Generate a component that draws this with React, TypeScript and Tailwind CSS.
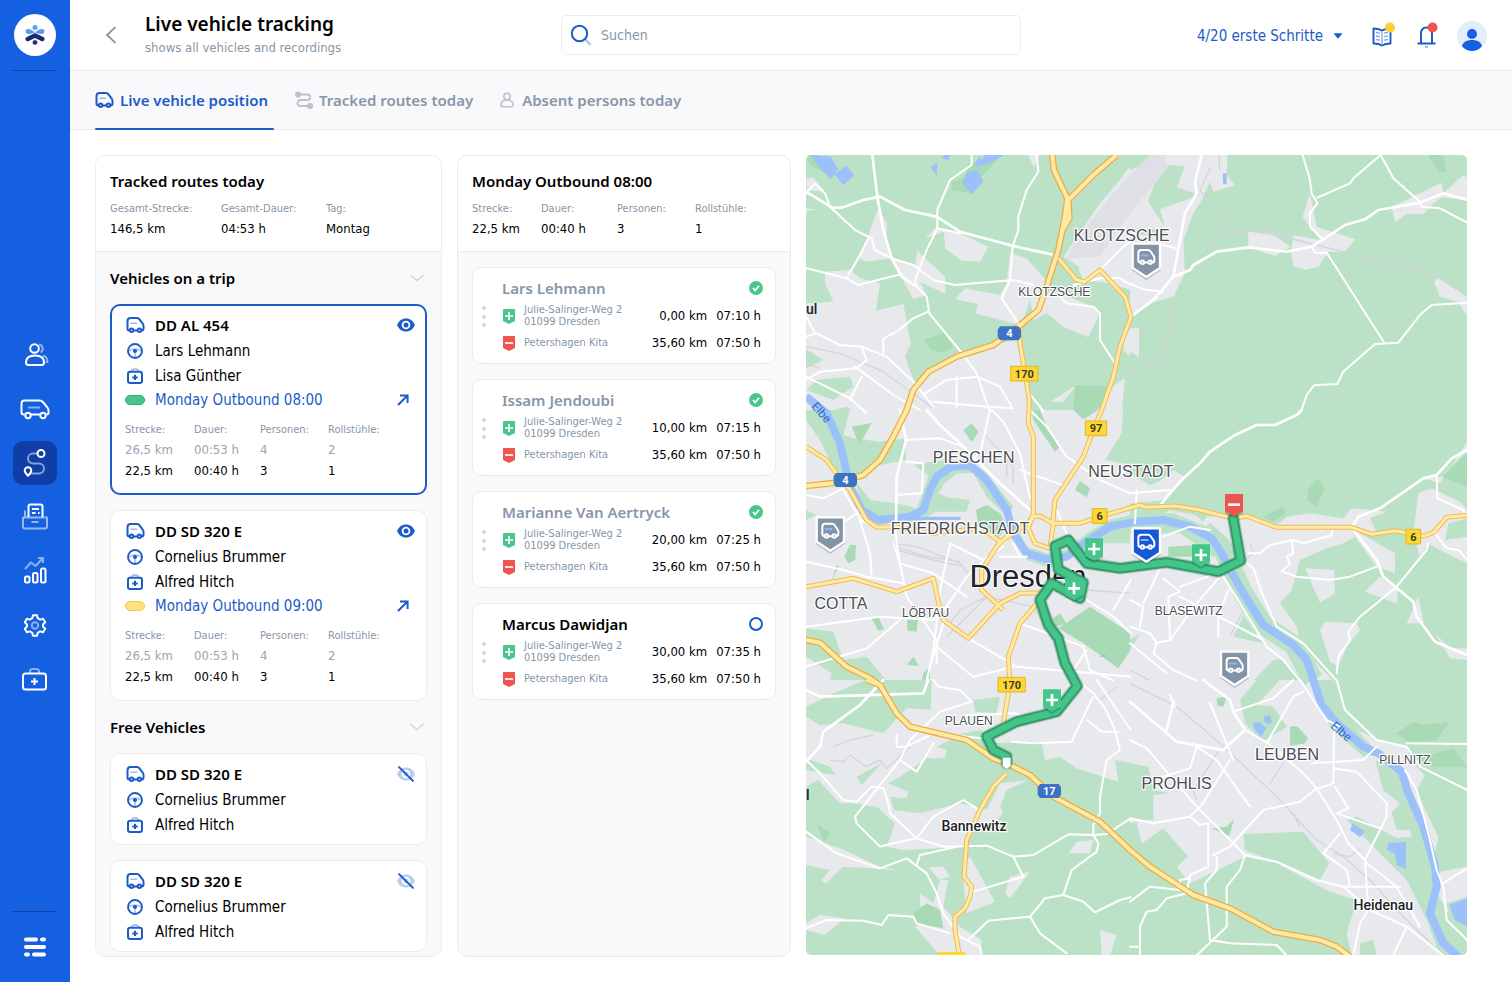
import type { ReactNode } from "react";

/* ---------- icons ---------- */

function CarIcon({ className = "" }: { className?: string }) {
  return (
    <svg viewBox="0 0 18 16" className={className} fill="none" stroke="currentColor" strokeWidth="2" strokeLinecap="round" aria-hidden="true">
      <path d="M2.8 13.4C1.6 13.3 1 12.6 1 11.4V4.2C1 2.1 2.1 1 4.2 1h6.4c1 0 1.700.3 2.200 1.100l3.400 4.600c.6.8.8 1.500.8 2.400v2.300c0 1.200-.6 1.900-1.800 2" />
      <path d="M7.300 13.400h3.200" />
      <circle cx="5.100" cy="13.200" r="1.700" />
      <circle cx="12.900" cy="13.200" r="1.700" />
      <path d="M4.400 6.300h5.800" strokeWidth="1.400" opacity=".4" />
    </svg>
  );
}

function WheelIcon() {
  return (
    <svg viewBox="0 0 16 16" className="size-4" fill="none" stroke="currentColor" aria-hidden="true">
      <circle cx="8" cy="8" r="7" strokeWidth="1.900" />
      <path d="M2 8c3-2.400 9-2.400 12 0M8 9v5" strokeWidth="1.800" opacity=".35" />
      <circle cx="8" cy="8" r="2.100" fill="currentColor" stroke="none" />
    </svg>
  );
}

function KitIcon() {
  return (
    <svg viewBox="0 0 16 16" className="size-4" fill="none" stroke="currentColor" aria-hidden="true">
      <path d="M4.500 3.400C4.700 1.800 5.600 1.100 7 1.100h2c1.400 0 2.300.7 2.500 2.300" strokeWidth="1.600" opacity=".4" />
      <rect x="1" y="3.800" width="14" height="11.200" rx="2.200" strokeWidth="2" />
      <path d="M8 6.700v5.400M5.300 9.400h5.400" strokeWidth="2" />
    </svg>
  );
}

function EyeIcon({ off = false }: { off?: boolean }) {
  return (
    <svg viewBox="0 0 18 16" className="h-4 w-[18px]" aria-hidden="true">
      <g opacity={off ? 0.3 : 1}>
        <path d="M9 1.500C4.800 1.500 1.600 4.200 0 8c1.600 3.800 4.800 6.500 9 6.500s7.400-2.700 9-6.500C16.400 4.200 13.200 1.500 9 1.500Z" fill="currentColor" />
        <circle cx="9" cy="8" r="4.300" fill="#fff" />
        <circle cx="9" cy="8" r="2.500" fill="currentColor" />
      </g>
      {off && <path d="M1.500.500 16.500 15.500" stroke="currentColor" strokeWidth="1.800" />}
    </svg>
  );
}

function ArrowIcon() {
  return (
    <svg viewBox="0 0 12 12" className="size-3" fill="none" stroke="currentColor" strokeWidth="2" aria-hidden="true">
      <path d="M1 11 10.500 1.500M3 1.400h7.600V9" />
    </svg>
  );
}

function StopIcon({ kind }: { kind: "in" | "out" }) {
  return (
    <svg viewBox="0 0 12 15" className="h-[15px] w-3" aria-hidden="true">
      <path d="M0 0h12v12L6 15 0 12Z" fill={kind === "in" ? "#48c78c" : "#f0544f"} />
      <path d={kind === "in" ? "M6 3v8M2 7h8" : "M2 7h8"} stroke="#fff" strokeWidth="1.700" />
    </svg>
  );
}

function ChevronDown() {
  return (
    <svg viewBox="0 0 14 8" className="h-2 w-[14px]" fill="none" stroke="#d4d6db" strokeWidth="1.500" aria-hidden="true">
      <path d="M.5 1 7 6.500 13.500 1" />
    </svg>
  );
}

const navIcons: { label: string; icon: ReactNode }[] = [
  {
    label: "Persons",
    icon: (
      <>
        <path d="M19 4.500a4.300 4.300 0 0 1 1.500 8M23 15.500c3 .8 4.500 3 4.500 6.500h-2" opacity=".5" />
        <circle cx="14.500" cy="8.500" r="4.300" />
        <path d="M6 22.500c0-4.500 3.500-7 9-7s9 2.500 9 7c0 1.700-.8 2.500-2.500 2.500h-13C6.800 25 6 24.200 6 22.500Z" />
      </>
    ),
  },
  {
    label: "Vehicles",
    icon: (
      <>
        <path d="M4.500 20.500H3.500c-1.500 0-2-.7-2-2V9.500C1.500 7.500 2.500 6.500 4.500 6.500h15c1.500 0 2.500.4 3.400 1.500l4.200 5.200c.9 1.100 1.400 1.800 1.400 3v2.300c0 1.300-.6 2-2 2M11 20.500h9" />
        <circle cx="8" cy="21.500" r="2.700" />
        <circle cx="23" cy="21.500" r="2.700" />
        <path d="M8 13.500h12" opacity=".5" />
      </>
    ),
  },
  {
    label: "Routes",
    icon: (
      <>
        <path d="M17.500 5.500H13a5 5 0 0 0 0 10h6a5 5 0 0 1 0 10h-9" opacity=".5" />
        <circle cx="21" cy="5.500" r="3.500" />
        <path d="M8 27.800c-2-2-3.300-3.300-3.300-5.200a3.300 3.300 0 0 1 6.600 0c0 1.900-1.300 3.200-3.300 5.200Z" />
      </>
    ),
  },
  {
    label: "Documents",
    icon: (
      <>
        <path d="M8.500 15V4.500c0-1.300.7-2 2-2h10c1.300 0 2 .7 2 2V15M12 7h7M12 11h3.500M18 11h1.500" />
        <path d="M5 16V8.500M3 15.500h24v9c0 1.300-.7 2-2 2H5c-1.300 0-2-.7-2-2ZM11.500 20h7" opacity=".55" />
      </>
    ),
  },
  {
    label: "Statistics",
    icon: (
      <>
        <path d="m5 13 6-6.500 4.500 3.500 7.500-8M18 2h5v5" opacity=".5" />
        <rect x="5" y="20.500" width="4.500" height="6" rx="1.500" />
        <rect x="13" y="17" width="4.500" height="9.500" rx="1.500" />
        <rect x="21" y="12.500" width="4.500" height="14" rx="1.500" />
      </>
    ),
  },
  {
    label: "Settings",
    icon: (
      <>
        <path d="M13 5.200h4l.7 3 2.400 1.400 3-.9 2.100 3.600-2.200 2.200v2l2.200 2.200-2.100 3.600-3-.9-2.400 1.400-.7 3h-4l-.7-3-2.400-1.400-3 .9-2.100-3.600 2.200-2.200v-2l-2.200-2.200 2.100-3.600 3 .9 2.400-1.400Z" />
        <circle cx="15" cy="15.500" r="3.200" opacity=".5" />
      </>
    ),
  },
  {
    label: "First aid",
    icon: (
      <>
        <path d="M10 9V7.500c0-1.700.8-2.500 2.500-2.500h4c1.700 0 2.500.8 2.500 2.500V9" opacity=".5" />
        <rect x="3" y="9.500" width="23" height="16" rx="2.500" />
        <path d="M14.500 14v7M11 17.500h7" />
      </>
    ),
  },
];

function Sidebar() {
  return (
    <aside className="flex w-[70px] shrink-0 flex-col items-center bg-[#1460e0]">
      <div className="flex w-full justify-center py-3.5">
        <a href="#home" aria-label="Home" className="flex size-[42px] items-center justify-center rounded-full bg-white">
          <svg viewBox="0 0 20 20" className="size-5" aria-hidden="true">
            <circle cx="10" cy="2.600" r="2.500" fill="#5f9bf0" />
            <path d="M10 7.600C8 5 5 3.800 2.800 3.900.9 4 .2 5.300.6 6.700c.4 1.600 1.700 2.400 3.600 2.300C6.500 9 8 8.400 10 7.600c2 .8 3.500 1.400 5.800 1.400 1.900.1 3.200-.7 3.600-2.300.4-1.400-.3-2.700-2.200-2.800C15 3.800 12 5 10 7.600Z" fill="#5f9bf0" />
            <path d="M2.800 14 10 10.500l7.200 3.500" fill="none" stroke="#1d2a6b" strokeWidth="4.600" strokeLinecap="round" strokeLinejoin="round" />
            <circle cx="10" cy="17.400" r="2.600" fill="#1d2a6b" stroke="#fff" strokeWidth=".6" />
          </svg>
        </a>
      </div>
      <div className="h-px w-11 bg-[#0f3ea6]" />
      <div className="flex-5" />
      <nav className="flex flex-col gap-2.5">
        {navIcons.map((item, i) => (
          <a
            key={item.label}
            href={`#nav-${i}`}
            aria-label={item.label}
            className={i === 2 ? "flex size-11 items-center justify-center rounded-[10px] bg-[#0f3ea6]" : "flex size-11 items-center justify-center"}
          >
            <svg viewBox="0 0 30 30" className="size-[30px]" fill="none" stroke="#fff" strokeWidth="2" strokeLinejoin="round" aria-hidden="true">
              {item.icon}
            </svg>
          </a>
        ))}
      </nav>
      <div className="flex-4" />
      <div className="h-px w-11 bg-[#0f3ea6]" />
      <button type="button" aria-label="Menu" className="flex h-[70px] w-full items-center justify-center">
        <svg viewBox="0 0 22 20" className="h-5 w-[22px]" fill="none" stroke="#fff" strokeWidth="4" strokeLinecap="round" aria-hidden="true">
          <path d="M2 2.500h10M18 2.500h2M2 10h18M2 17.500h2M10 17.500h10" />
        </svg>
      </button>
    </aside>
  );
}

/* ---------- header ---------- */

function Header() {
  return (
    <header className="grid h-[70px] grid-cols-[1fr_460px_1fr] items-center bg-white">
      <div className="flex items-center">
        <button type="button" aria-label="Back" className="ml-[35px] flex w-10 shrink-0">
          <svg viewBox="0 0 12 18" className="h-[18px] w-3" fill="none" stroke="#8494a7" strokeWidth="1.800" aria-hidden="true">
            <path d="M10.500 1.200 2 9l8.500 7.800" />
          </svg>
        </button>
        <div className="pt-0.5">
          <h1 className="font-['Noto_Sans',sans-serif] text-[19px] leading-6 font-semibold text-black">Live vehicle tracking</h1>
          <p className="text-[13px] leading-6 text-[#8796a8]">shows all vehicles and recordings</p>
        </div>
      </div>
      <div className="flex h-10 items-center gap-[9px] rounded-[5px] border border-[#ececf0] pl-2">
        <svg viewBox="0 0 22 22" className="size-[22px] shrink-0" fill="none" aria-hidden="true">
          <path d="m15 15 5.500 6" stroke="#a5bfe9" strokeWidth="2" />
          <circle cx="9.500" cy="9.500" r="7.700" stroke="#1b5cc8" strokeWidth="2" />
        </svg>
        <input type="search" aria-label="Suchen" placeholder="Suchen" className="h-full min-w-0 flex-1 bg-transparent text-sm outline-none placeholder:text-[#8796a8]" />
      </div>
      <div className="flex items-center justify-end pt-0.5 pr-[25px]">
        <button type="button" className="mr-[27px] flex items-center gap-2.5 text-[15px] text-[#1b5cc8]">
          4/20 erste Schritte
          <svg viewBox="0 0 10 6" className="h-1.5 w-2.5" fill="currentColor" aria-hidden="true">
            <path d="M.5.300h9L5 5.700Z" />
          </svg>
        </button>
        <button type="button" aria-label="Handbook" className="mr-[19px]">
          <svg viewBox="0 0 26 28" className="h-7 w-[26px]" fill="none" aria-hidden="true">
            <path d="M12 8.500C9.500 7 7 6.500 3.500 6.500v15c3.500 0 6 .5 8.500 2 2.500-1.500 5-2 8.500-2v-15c-3.500 0-6 .5-8.500 2Z" stroke="#1b5cc8" strokeWidth="1.900" strokeLinejoin="round" />
            <path d="M12 9v14M6 10.500l4 .6M6 14l4 .6M6 17.500l4 .6M18 10.500l-4 .6M18 14l-4 .6M18 17.500l-4 .6" stroke="#7fa6e4" strokeWidth="1.300" />
            <circle cx="20" cy="5.500" r="5" fill="#ffcf31" />
          </svg>
        </button>
        <button type="button" aria-label="Notifications" className="mr-4">
          <svg viewBox="0 0 26 28" className="h-7 w-[26px]" fill="none" aria-hidden="true">
            <path d="M6 21v-9c0-4 2-6.500 5.500-6.500S17 8 17 12v9M2.500 21.500h18" stroke="#1b5cc8" strokeWidth="2" />
            <path d="M10 24.800h3" stroke="#8fb0e8" strokeWidth="2" />
            <circle cx="17.500" cy="5.500" r="5" fill="#f0544f" />
          </svg>
        </button>
        <button type="button" aria-label="Profile">
          <svg viewBox="0 0 30 30" className="size-[30px]" aria-hidden="true">
            <circle cx="15" cy="15" r="15" fill="#e4edfb" />
            <circle cx="15" cy="13" r="5" fill="#1460e0" />
            <path d="M5 25c1-3.800 4.500-6 10-6s9 2.200 10 6c-2.500 3.300-6 5-10 5s-7.500-1.700-10-5Z" fill="#1460e0" />
          </svg>
        </button>
      </div>
    </header>
  );
}

function Tabs() {
  const base = "relative flex h-full items-center pr-1.5 font-['Noto_Sans',sans-serif] text-[15px] font-semibold";
  return (
    <nav className="flex h-[60px] gap-[21px] border-y border-[#e9eaee] bg-[#f9f9fb] pl-[25px]">
      <a href="#position" className={`${base} gap-1.5 text-[#1b5cc8]`}>
        <CarIcon className="h-4 w-[19px]" />
        Live vehicle position
        <span className="absolute inset-x-0 -bottom-px h-0.5 rounded-full bg-[#1b5cc8]" />
      </a>
      <a href="#routes" className={`${base} gap-1.5 text-[#8796a8]`}>
        <svg viewBox="0 0 18 18" className="size-[18px]" fill="none" stroke="#b9c2cd" strokeWidth="1.800" aria-hidden="true">
          <path d="M4 3.500h8.500a2.700 2.700 0 0 1 0 5.500H5.500a3 3 0 0 0 0 6H14" />
          <circle cx="3" cy="3.500" r="2.200" fill="#b9c2cd" />
          <circle cx="15" cy="15" r="2.200" fill="#b9c2cd" />
        </svg>
        Tracked routes today
      </a>
      <a href="#absent" className={`${base} gap-2 text-[#8796a8]`}>
        <svg viewBox="0 0 14 16" className="h-4 w-3.5" fill="none" stroke="#b9c2cd" strokeWidth="1.600" aria-hidden="true">
          <circle cx="7" cy="4.500" r="3.200" />
          <path d="M1 13c0-3.200 2-5 6-5s6 1.800 6 5c0 1-.5 1.700-1.500 1.700h-9C1.500 14.700 1 14 1 13Z" />
        </svg>
        Absent persons today
      </a>
    </nav>
  );
}

/* ---------- vehicle column ---------- */

type Vehicle = { plate: string; driver: string; aide: string; tour?: string; state?: "green" | "yellow"; active?: boolean };

const onTrip: Vehicle[] = [
  { plate: "DD AL 454", driver: "Lars Lehmann", aide: "Lisa Günther", tour: "Monday Outbound 08:00", state: "green", active: true },
  { plate: "DD SD 320 E", driver: "Cornelius Brummer", aide: "Alfred Hitch", tour: "Monday Outbound 09:00", state: "yellow" },
];
const free: Vehicle[] = [
  { plate: "DD SD 320 E", driver: "Cornelius Brummer", aide: "Alfred Hitch" },
  { plate: "DD SD 320 E", driver: "Cornelius Brummer", aide: "Alfred Hitch" },
];

function VehicleCard({ v }: { v: Vehicle }) {
  return (
    <article
      className={
        v.active
          ? "rounded-[10px] border-2 border-[#1b5cc8] bg-white px-[13px] py-1.5"
          : "rounded-[10px] border border-[#ececf0] bg-white px-3.5 py-[7px]"
      }
    >
      <div className="grid grid-cols-[20px_1fr_auto] items-center gap-x-2.5 text-[15px]">
        <span className="flex justify-center text-[#1b5cc8]"><CarIcon className="h-4 w-[19px]" /></span>
        <h3 className="font-['Noto_Sans',sans-serif] leading-[26px] font-semibold">{v.plate}</h3>
        <button type="button" aria-label="Show on map" className="-mr-[3px] text-[#1b5cc8]"><EyeIcon off={!v.tour} /></button>
        <span className="flex justify-center text-[#1b5cc8]"><WheelIcon /></span>
        <p className="col-span-2 leading-[26px]">{v.driver}</p>
        <span className="flex justify-center text-[#1b5cc8]"><KitIcon /></span>
        <p className="col-span-2 leading-6">{v.aide}</p>
        {v.tour && (
          <>
            <span className={v.state === "green" ? "h-2.5 rounded-full border border-[#35a273] bg-[#48c78c]" : "h-2.5 rounded-full border border-[#f2cb4a] bg-[#ffe27a]"} />
            <a href="#tour" className="leading-6 text-[#1b5cc8]">{v.tour}</a>
            <a href="#open" aria-label="Open tour" className="text-[#1b5cc8]"><ArrowIcon /></a>
          </>
        )}
      </div>
      {v.tour && (
        <table className="mt-2 mb-1.5 w-full table-fixed text-left text-[13px]">
          <colgroup>
            <col className="w-[69px]" />
            <col className="w-[66px]" />
            <col className="w-[68px]" />
            <col />
          </colgroup>
          <thead className="text-[11px] leading-[19px] text-[#8796a8]">
            <tr>{["Strecke:", "Dauer:", "Personen:", "Rollstühle:"].map((t) => <th key={t} className="p-0 font-normal">{t}</th>)}</tr>
          </thead>
          <tbody className="leading-[21px]">
            <tr className="text-[#98a5b4]">{["26,5 km", "00:53 h", "4", "2"].map((t) => <td key={t} className="p-0">{t}</td>)}</tr>
            <tr>{["22,5 km", "00:40 h", "3", "1"].map((t) => <td key={t} className="p-0">{t}</td>)}</tr>
          </tbody>
        </table>
      )}
    </article>
  );
}

function Stat({ label, value }: { label: string; value: string }) {
  return (
    <div>
      <dt className="text-[11px] leading-5 text-[#8796a8]">{label}</dt>
      <dd className="text-[13px] leading-5">{value}</dd>
    </div>
  );
}

function SectionTitle({ children }: { children: ReactNode }) {
  return (
    <div className="flex h-[52px] items-center justify-between pr-[3px]">
      <h2 className="font-['Noto_Sans',sans-serif] text-[15px] font-semibold">{children}</h2>
      <button type="button" aria-label="Collapse section"><ChevronDown /></button>
    </div>
  );
}

function PanelHeader({ title, children }: { title: string; children: ReactNode }) {
  return (
    <div className="border-b border-[#ececf0] bg-white px-3.5 pt-3.5 pb-3">
      <h2 className="mb-[7px] font-['Noto_Sans',sans-serif] text-[15px] leading-[22px] font-semibold">{title}</h2>
      {children}
    </div>
  );
}

function VehiclePanel() {
  return (
    <section className="w-[347px] shrink-0 overflow-hidden rounded-[10px] border border-[#ececf0] bg-[#f9f9fb]">
      <PanelHeader title="Tracked routes today">
        <dl className="grid grid-cols-[111px_105px_1fr]">
          <Stat label="Gesamt-Strecke:" value="146,5 km" />
          <Stat label="Gesamt-Dauer:" value="04:53 h" />
          <Stat label="Tag:" value="Montag" />
        </dl>
      </PanelHeader>
      <div className="px-3.5 pb-1">
        <SectionTitle>Vehicles on a trip</SectionTitle>
        <div className="flex flex-col gap-[15px]">{onTrip.map((v) => <VehicleCard key={v.tour} v={v} />)}</div>
        <SectionTitle>Free Vehicles</SectionTitle>
        <div className="flex flex-col gap-[15px]">{free.map((v, i) => <VehicleCard key={i} v={v} />)}</div>
      </div>
    </section>
  );
}

/* ---------- tour column ---------- */

const stops = [
  { name: "Lars Lehmann", km: "0,00 km", time: "07:10 h", done: true },
  { name: "Issam Jendoubi", km: "10,00 km", time: "07:15 h", done: true },
  { name: "Marianne Van Aertryck", km: "20,00 km", time: "07:25 h", done: true },
  { name: "Marcus Dawidjan", km: "30,00 km", time: "07:35 h", done: false },
];

function TourPanel() {
  return (
    <section className="w-[334px] shrink-0 overflow-hidden rounded-[10px] border border-[#ececf0] bg-[#f9f9fb]">
      <PanelHeader title="Monday Outbound 08:00">
        <dl className="grid grid-cols-[69px_76px_78px_1fr]">
          <Stat label="Strecke:" value="22,5 km" />
          <Stat label="Dauer:" value="00:40 h" />
          <Stat label="Personen:" value="3" />
          <Stat label="Rollstühle:" value="1" />
        </dl>
      </PanelHeader>
      <ol className="flex flex-col gap-[15px] px-3.5 py-[15px]">
        {stops.map((s) => (
          <li key={s.name} className="flex gap-4 rounded-[10px] border border-[#ececf0] bg-white pt-2 pr-3 pb-[7px] pl-[9px]">
            <svg viewBox="0 0 4 22" className="h-[22px] w-1 shrink-0 self-center" fill="#d3d5da" aria-hidden="true">
              <circle cx="2" cy="3" r="2" />
              <circle cx="2" cy="12" r="2" />
              <circle cx="2" cy="20" r="2" />
            </svg>
            <div className="min-w-0 flex-1">
              <div className="mb-0.5 flex items-center justify-between">
                <h3 className={s.done ? "font-['Noto_Sans',sans-serif] text-[15px] leading-6 font-semibold text-[#8796a8]" : "font-['Noto_Sans',sans-serif] text-[15px] leading-6 font-semibold"}>{s.name}</h3>
                <svg viewBox="0 0 14 14" className="size-3.5" fill="none" aria-hidden="true">
                  {s.done ? (
                    <>
                      <circle cx="7" cy="7" r="7" fill="#48c78c" />
                      <path d="m4 7.200 2.300 2.200L10 4.800" stroke="#fff" strokeWidth="1.700" />
                    </>
                  ) : (
                    <circle cx="7" cy="7" r="6" stroke="#1b5cc8" strokeWidth="2" />
                  )}
                </svg>
              </div>
              <div className="grid grid-cols-[12px_1fr_auto_auto] items-center gap-x-[9px] pr-0.5 pl-px text-[13px]">
                <StopIcon kind="in" />
                <p className="text-[11px] leading-3 whitespace-nowrap text-[#8796a8]">Julie-Salinger-Weg 2<br />01099 Dresden</p>
                <span className="text-right leading-7 whitespace-nowrap">{s.km}</span>
                <span className="leading-7 whitespace-nowrap">{s.time}</span>
                <StopIcon kind="out" />
                <p className="text-[11px] whitespace-nowrap text-[#8796a8]">Petershagen Kita</p>
                <span className="leading-[26px] whitespace-nowrap">35,60 km</span>
                <span className="leading-[26px] whitespace-nowrap">07:50 h</span>
              </div>
            </div>
          </li>
        ))}
      </ol>
    </section>
  );
}

/* ---------- map (3 map units per pixel, split into tiles) ---------- */

type Tile = {
  x: number;
  y: number;
  w: number;
  h: number;
  base: "green" | "grey";
  grey: string[];
  green: string[];
  park: string[];
  lake: string[];
  rail: string[];
  road: string[];
};

const tiles: Tile[] = [
  {
    x: 0, y: 0, w: 992, h: 782, base: "green",
    grey: [
      "20,85 40,82 75,125 20,120", "18,175 45,178 18,185",
      "210,240 235,172 262,225 258,270 275,325 200,335 178,325 205,260",
      "275,320 345,345 352,303 435,380 437,432 360,395 380,435 340,447 300,375",
      "375,265 410,232 480,250 565,290 540,335 485,332 435,295 432,245",
      "18,460 100,455 75,400 75,365 150,360 180,385 240,400 228,482 310,462 332,580 315,620 345,700 385,665 480,615 600,580 650,570 680,740 690,790 18,790",
      "465,448 495,415 600,435 620,400 630,308 680,325 745,400 730,455 660,525 525,490 535,462",
      "695,440 740,420 770,425 880,470 900,490 865,562 790,530 740,490 700,510",
      "992,45 960,90 900,160 790,320 830,345 850,390 930,400 992,420",
      "685,15 718,15 702,52", "970,545 992,538 992,620 970,600",
      "920,720 975,685 965,790 900,790", "750,755 830,705 790,755",
    ],
    green: ["18,597 70,630 18,655", "50,690 150,680 160,710 100,750 18,720", "60,790 140,770 170,790", "770,325 838,350 832,395 790,360", "450,170 505,175 480,185", "690,450 700,500 660,535"],
    park: ["18,15 60,15 75,70 30,45", "455,95 490,85 500,60 540,20 600,20 545,80 520,132 455,120", "825,705 940,710 900,770 870,790 820,790", "370,570 430,550 460,590 430,608 395,600"],
    lake: ["32,15 92,20 115,58 92,87 62,58", "103,72 140,47 162,75 130,106", "392,52 412,38 410,77", "425,25 432,15 450,15 445,30", "487,100 500,68 532,60 550,95 515,133", "528,52 530,30 555,15 612,15 575,37"],
    rail: ["18,590 120,610 250,665 400,775", "20,640 60,655", "550,15 545,30"],
    road: [
      "217,15 232,140 250,240 275,325 305,380 342,405", "18,125 95,172 125,173 190,150 240,140 315,180 410,200 480,245 640,288 755,313",
      "18,130 45,100 75,130 90,170 165,240 215,265 225,300 275,325 340,345 400,390 465,405 640,390 700,405",
      "515,15 515,45 450,90 412,180 412,235 380,300 345,390 350,410 380,440 388,490 485,608 530,670 560,760 570,785",
      "710,15 715,65 680,120 655,200 655,240 638,290 630,390 605,445 655,520", "18,355 140,385 175,405 305,372", "140,385 180,315 205,265",
      "385,485 340,505 290,545 250,565 250,610", "18,560 50,550 120,585 185,590 260,620 340,695 400,770", "18,690 60,665 170,655 200,630 185,590",
      "18,680 150,745 200,790", "185,680 150,750", "165,650 280,735 360,780", "375,730 440,690 530,680 600,710 635,770", "470,680 470,770",
      "400,755 560,770 640,775", "770,430 800,460 880,470 900,490 900,570 945,640", "820,405 900,385 960,385 992,405", "900,360 970,290 992,275",
      "680,720 720,770 730,785", "410,235 480,250", "18,500 45,550",
    ],
  },
  {
    x: 990, y: 0, w: 1012, h: 782, base: "green",
    grey: [
      "0,60 110,15 292,15 290,75 315,105 250,125 240,95 215,150 190,190 160,270 165,370 130,440 75,455 0,500",
      "355,245 430,255 482,290 435,318 355,292", "490,255 570,270 518,200 540,130 560,230 675,268 645,305 595,305 565,350 525,360 490,348 483,305",
      "785,170 935,98 940,130 1000,75 1012,85 1012,150 935,142 905,165 880,192 830,192 795,217", "912,395 925,385 1010,440 1010,498 985,455 930,440",
      "0,535 27,535 27,620 0,605",
    ],
    green: ["105,45 165,48 140,112 210,135 90,178 105,230 60,165 55,150 75,100", "30,240 105,235 115,250 30,255", "0,15 40,15 0,60"],
    park: ["895,15 940,15 948,65 925,65"],
    lake: ["278,70 290,70 290,103 280,103"],
    rail: ["0,675 60,645 105,610 118,540 115,455", "215,310 250,270 350,240 440,255 620,300 920,375 1000,425", "240,55 210,120 270,205 272,240", "268,15 268,60"],
    road: [
      "215,15 195,95 200,130 165,190 150,270 130,380 75,445 10,495", "130,380 180,360 190,345 260,305 355,292 470,305 545,290 580,268 645,225 705,208 745,180 870,158 940,130 1012,150",
      "518,15 540,90 545,130 562,160 540,190 540,230 575,265", "752,15 670,85 660,100 562,143", "752,15 790,85 870,155 875,170 930,175 1012,218",
      "545,290 555,308 590,308 762,577", "1012,458 905,465 870,495 805,578 735,582 640,665 622,702 552,706 530,735 515,780 508,790", "0,400 40,418 100,425", "80,280 140,295",
    ],
  },
  {
    x: 0, y: 780, w: 992, h: 812, base: "grey",
    grey: [],
    green: [
      "18,0 150,0 130,75 160,85 240,95 315,85 318,150 240,165 200,195 175,210 135,205 105,185 60,90 18,30",
      "165,210 210,270 290,280 350,295 375,230 385,195 340,165 390,155 440,150 510,150 560,190 640,290 620,320 560,260 520,190 470,190 430,225 415,250 440,262 510,270 500,305 405,305 360,335 230,350 190,320",
      "970,0 992,0 992,165 915,150 965,70", "640,330 680,410 740,430 800,420 860,370 930,330 992,315 992,400 900,400 850,430 740,470 680,450",
      "18,655 100,665 130,750 200,740 260,812 90,812 95,790 18,740", "18,300 50,315 18,330",
    ],
    park: [
      "155,50 215,38 178,105", "490,60 515,40 535,65 515,97", "695,0 720,0 745,60 780,110 765,125 700,30", "820,0 895,0 850,28", "825,240 840,212 870,235 860,262",
      "528,300 560,285 600,310 622,350 590,390 560,350 535,350", "133,440 150,405 168,405 166,450 145,460", "95,512 108,470 118,465", "213,622 235,620 252,658 235,662",
      "322,620 355,615 350,665 322,662", "320,765 340,740 357,768", "775,655 870,590 1015,685 955,775 850,700", "740,640 780,610 800,640 770,650", "370,790 390,770 390,812 365,812",
    ],
    lake: ["898,740 915,730 918,742"],
    rail: [
      "280,400 350,410 480,460", "285,410 380,440 480,455", "290,420 400,450 490,470", "480,460 560,560 440,680", "560,560 700,590 760,690", "560,560 480,600 450,640",
      "550,70 640,170 640,220", "620,120 620,200", "860,540 992,550",
    ],
    road: [
      "300,0 318,90 290,200 288,340 240,350 180,330", "380,0 420,45 480,100 600,220 690,300", "315,90 420,85 490,110", "570,0 545,110 520,150", "575,0 610,35 660,130 690,265",
      "690,0 740,50 800,140 900,210 992,250", "320,155 370,160 365,250 290,255", "18,255 70,265 130,235", "285,345 290,400 300,460 320,560 410,690 410,760", "450,405 430,490 410,600 410,640 400,720 380,812",
      "280,400 300,460 400,490 500,560", "18,455 130,480 200,500 310,520", "620,390 500,500 440,590 400,630 240,620 18,650", "18,770 200,715 300,630", "505,685 650,770 880,790 992,800",
      "660,640 850,710 870,780 940,812", "940,600 992,510", "860,570 940,620 992,670", "170,300 210,430 215,500", "600,440 680,440", "450,400 550,450 610,410", "410,710 520,800 640,770",
      "130,240 170,310 110,350", "660,180 800,230", "770,300 800,370", "430,640 390,770", "640,400 660,440", "860,720 820,780",
    ],
  },
  {
    x: 990, y: 780, w: 1012, h: 812, base: "green",
    grey: [
      "0,190 60,225 85,215 130,180 165,200 110,270 0,280", "0,365 120,300 220,320 330,315 380,325 440,348 520,345 600,330 660,350 700,365 640,400 590,415 510,450 485,540 450,580 500,650 510,700 540,740 610,812 0,812",
      "470,320 540,310 640,325 665,295 770,305 720,325 740,370 665,355 440,345", "690,370 795,430 795,490 740,470 665,365", "850,370 865,250 905,235 990,275 1012,300 1012,325 955,340 945,390 1012,380 1012,460 930,420 895,400 870,440",
      "525,475 612,480 615,550 570,578", "705,545 750,500 805,540 800,580", "570,660 585,635 680,640 690,660 650,710 625,770 600,755", "830,640 865,560 882,640", "915,670 960,715 1012,715 1012,750 960,745", "880,205 930,220 1012,95 1012,120 935,200",
    ],
    green: ["310,680 340,615 400,700", "0,690 30,670 0,720", "370,812 430,750 460,745 520,812", "0,310 130,310 230,350 280,420 250,440 150,370 0,370", "190,310 240,305 220,335"],
    park: ["115,410 200,405 200,440 115,440", "535,235 565,205 585,235 560,290 530,270", "400,320 460,290 467,310 430,337", "935,200 1012,130 1012,230"],
    lake: [],
    rail: ["300,490 370,430 360,400", "0,780 60,812", "300,680 340,600"],
    road: [
      "515,0 500,15 435,45 380,45 315,75 240,125 210,160 165,200 110,260 92,285", "1012,120 965,145 920,195 880,205 750,295 685,320 665,352 740,450 760,500 850,575 860,620 915,695 1012,735",
      "920,195 922,265 1000,300 1005,315", "895,400 890,420 800,530 690,620 655,665 660,690 625,740 620,790", "355,430 390,430 420,405 490,390 520,400 605,375 608,360",
      "485,390 490,430 470,440 480,460 455,485 500,500 600,510 660,500 740,470", "915,370 950,415 985,420 1012,450", "340,450 370,475 400,560 440,650 520,700 620,812", "280,500 330,580 410,710 460,750 510,812",
      "0,650 60,670 80,700 70,730 130,780 200,812", "120,690 200,580 270,500", "75,700 120,690 115,560 150,545 100,505", "40,580 90,475", "0,570 40,590 30,650", "150,530 260,490", "150,560 400,690", "265,680 265,620 295,540", "20,240 15,340", "0,250 120,240",
      "240,360 180,350 100,380", "0,700 110,790",
    ],
  },
  {
    x: 0, y: 1590, w: 992, h: 826, base: "green",
    grey: [
      "18,0 992,0 992,248 945,240 955,305 830,265 780,230 735,240 725,185 560,190 545,150 490,160 410,200 440,210 435,235 380,235 300,290 265,310 325,335 320,355 270,350 285,400 225,380 165,370 120,370 55,300 18,320",
      "18,470 120,505 240,560 300,570 130,560 75,612 65,600 90,570 18,555", "235,385 360,400 480,370 560,390 600,310 685,300 620,330 600,380 610,400 580,430 520,450 500,500 310,510 260,500 285,430",
      "385,562 430,560 450,590 420,600", "485,560 510,530 585,665 500,700", "630,590 690,575 630,655 615,640", "360,640 400,670 420,600 445,600 430,680 480,740 545,780 540,826 420,826 345,740 380,720 430,740 410,680 360,680",
      "18,730 60,705 135,715 75,765 18,750", "805,520 830,485 880,480 870,520", "900,750 950,765 930,826 905,826",
    ],
    green: ["18,80 100,40 195,0 395,0 392,90 320,85 250,160 130,130 60,135 18,110", "520,60 600,50 590,100 525,95", "170,290 245,250 185,315", "18,235 90,260 105,285 18,270"],
    park: ["340,700 380,670 420,690 430,745 345,730", "50,430 92,460 70,485"],
    lake: [],
    rail: ["90,240 130,245 150,225 200,260 240,240 260,265 330,200", "100,200 150,180 220,165", "900,60 950,20"],
    road: [
      "18,245 60,200 70,155 180,75 250,0", "18,30 60,50 370,40 385,0", "400,0 415,20 480,30 515,65 420,95 330,180 300,240 165,410 170,430 240,500 280,490 350,475 430,500 560,497 640,530 700,525 805,463 880,465 920,462 985,420 992,420",
      "290,165 290,200 320,200 400,160 545,175", "300,240 350,275 400,190", "18,240 60,280 130,360 170,365 215,320 250,325 265,370 270,400 350,475 400,410 490,360 530,385",
      "18,455 110,520 240,565 320,535 380,580 410,640 430,700 480,770 540,800 545,825", "350,555 360,525 470,500", "640,530 670,590 520,635", "18,745 80,720 190,722 245,735 265,705 340,710 350,730 450,760",
      "505,780 565,722 690,710 735,655 790,645 815,570 890,515 895,490 880,465 880,435 900,400 900,350 920,240 960,210 945,150 915,85 880,40 830,0", "790,645 850,665 885,697 960,660 992,652",
      "690,710 720,760 800,820", "635,185 700,190 815,185 860,90 880,50", "860,120 905,155 960,155", "500,105 640,100 720,120", "890,0 992,150",
    ],
  },
  {
    x: 990, y: 1590, w: 1012, h: 826, base: "grey",
    grey: [],
    green: [
      "0,250 55,260 70,330 120,340 70,345 70,420 0,420", "0,430 20,425 35,490 100,445 175,530 140,560 180,610 345,530 440,550 600,635 680,660 650,760 665,826 0,826", "340,462 520,455 598,550 570,600 345,510",
      "330,60 380,0 450,0 380,75 430,80 470,140 400,185 345,130", "560,0 1012,0 1012,560 930,575 905,560 925,470 890,400 860,330 885,285 840,240 830,200 750,180 680,150 720,130 600,0", "540,0 600,0 720,130 680,150 750,225 700,230 600,140",
      "650,420 680,410 830,490 870,560 920,640 1012,790 1012,826 930,826 890,720 830,600", "735,240 820,280 860,400 925,590 900,620 800,475 845,470 840,450 800,450 785,400 810,370 760,330", "690,790 730,780 740,826 690,826", "950,670 1012,650 1012,780 960,720",
    ],
    park: ["480,140 500,138 535,175 525,190 480,198", "800,160 850,125 880,135 960,125 920,180 840,190", "860,235 970,205 1012,260 910,260", "245,445 290,440 312,418 298,468", "260,55 290,50 280,80 262,78"],
    lake: ["368,130 390,125 408,145 395,170 375,150", "402,108 420,106 426,125 412,133 402,122", "668,430 705,455 690,472 660,450", "775,490 828,485 828,567 800,555 795,520 770,510", "958,675 1012,655 1012,740 975,720"],
    rail: ["0,10 140,80 270,190 450,360 560,480 640,530 720,600 820,710 940,826", "265,215 190,330 200,360", "420,310 460,250", "610,520 660,530 690,505", "510,440 490,400"],
    road: [
      "0,65 140,185 280,210 345,150 310,95 300,60 220,0", "130,65 110,150", "120,45 135,80", "0,180 50,205 200,380 345,525 440,545 560,600 640,620 720,690 830,740 940,826", "345,150 415,190 520,280 560,325 620,420 655,490 705,540 715,690 690,730 670,826",
      "300,240 215,375 180,410 70,430 0,415", "180,410 210,435 235,430 235,560 180,585 170,640 110,655 80,690 50,695 30,740 30,826", "345,525 330,570 290,620 290,740 200,826", "260,530 260,570 225,610 240,780", "240,780 300,790 440,795 470,826",
      "565,325 610,310 612,140", "560,325 510,365 400,390 300,500 250,525", "610,265 680,275 770,370 770,410 705,540", "615,320 655,385 620,400 750,445", "510,0 590,120 630,140", "620,0 645,90 740,180 830,200 870,260 1012,330", "830,190 1012,192",
      "200,200 180,265 100,290", "200,200 260,240 360,380", "240,70 310,240", "410,190 490,50 520,35", "310,95 430,55 490,0", "545,250 700,240 740,200", "825,270 860,330 900,480 920,570 940,620 950,720 1012,780", "940,610 970,590 1012,565", "630,460 580,520 650,570 660,620",
      "705,545 800,620 870,740", "0,665 60,620 150,630 150,600 180,595", "0,800 25,800", "640,620 810,620", "830,740 790,826",
    ],
  },
];

const elbe =
  "18,740 80,790 120,880 150,1010 185,1080 235,1110 330,1100 370,1080 390,1020 410,980 455,950 510,945 560,990 620,1080 640,1150 680,1210 740,1228 800,1220 860,1175 930,1130 1010,1115 1090,1110 1170,1130 1235,1165 1265,1210 1290,1260 1330,1330 1390,1425 1480,1485 1520,1530 1540,1590 1565,1665 1610,1720 1690,1790 1735,1810 1805,1865 1825,1930 1870,2030 1905,2150 1910,2210 1890,2290 1930,2380 1975,2420";

const mainRoads = [
  "757,15 762,60 802,145 795,200 775,300 740,410 715,480 655,530 580,585 470,620 385,665 340,720 320,780 280,860 240,930 190,975 110,998 18,1008",
  "950,15 880,75 805,150 808,205 785,245",
  "200,1590 240,1605 290,1690 330,1730 500,1770 580,1825 620,1840 690,1875 760,1940 900,2015 990,2100 1050,2150 1180,2235 1290,2275 1420,2345 1560,2370 1610,2390 1650,2420",
  "18,1470 60,1478 140,1550 210,1585 245,1610",
];

const yellowRoads = [
  "655,520 660,580 670,640 680,700 688,750 685,820 700,860 700,1090 685,1135 705,1180 750,1195 760,1120 720,1098 700,1100",
  "775,325 830,390 855,395 900,360 975,440 993,500 960,590 940,680 905,780 880,840 850,920 765,1050 758,1120 840,1120 900,1100 1020,1065 1040,1072 1125,1068 1200,1080 1300,1105 1340,1098 1430,1132 1655,1132 1715,1153 1785,1142 1870,1158 1900,1148 1940,1102 2001,1096",
  "18,890 80,930 105,965 150,1020 200,1110 230,1132 280,1130 400,1150 545,1135 600,1175",
  "700,1105 640,1150 600,1175 545,1260 545,1320 610,1380",
  "18,1310 160,1285 290,1325 400,1285 418,1370 430,1410 505,1465 600,1360 660,1330 750,1328",
  "720,1350 660,1420 625,1520 630,1600 610,1720",
  "620,1870 580,1910 540,1980 500,2070 492,2180 515,2210 510,2240 495,2275 465,2300 465,2340 478,2415",
  "590,1190 630,1150",
];

const route =
  "1300,1105 1322,1232 1255,1265 1100,1237 960,1255 860,1240 805,1170 765,1188 775,1258 850,1298 840,1345 755,1300 720,1350 745,1425 775,1465 795,1540 832,1608 770,1685 650,1715 560,1760 580,1800 620,1820 620,1840";

function District({ x, y, size, children }: { x: number; y: number; size: "lg" | "sm"; children: string }) {
  return (
    <text
      x={x} y={y} textAnchor="middle" fill="#4a4d52" stroke="#fff" strokeWidth="7" paintOrder="stroke" strokeLinejoin="round"
      className={size === "lg" ? "font-['Liberation_Sans',sans-serif] text-[48px]" : "font-['Liberation_Sans',sans-serif] text-[36px]"}
    >
      {children}
    </text>
  );
}

function Town({ x, y, children }: { x: number; y: number; children: string }) {
  return (
    <text x={x} y={y} textAnchor="middle" fill="#202124" stroke="#fff" strokeWidth="7" paintOrder="stroke" strokeLinejoin="round" className="font-[Roboto,sans-serif] text-[42px] font-medium">
      {children}
    </text>
  );
}

function RoadSign({ x, y, blue = false, children }: { x: number; y: number; blue?: boolean; children: string }) {
  const half = children.length === 3 ? 41 : children.length === 2 ? 32 : 22;
  return (
    <g transform={`translate(${x} ${y})`}>
      {blue ? (
        <path d="M-28-21h56l7 10v22l-7 10h-56l-7-10v-22Z" fill="#3d73c4" />
      ) : (
        <rect x={-half} y="-22" width={half * 2} height="44" fill="#fdd835" stroke="#e6b422" strokeWidth="3" />
      )}
      <text y="12" textAnchor="middle" fill={blue ? "#fff" : "#3a3a2a"} className="font-[Roboto,sans-serif] text-[33px] font-bold">{children}</text>
    </g>
  );
}

function VehiclePin({ x, y, color }: { x: number; y: number; color: string }) {
  return (
    <g transform={`translate(${x} ${y})`}>
      <path d="M-43-48h86v75L0 56l-43-29Z" fill="#1f2937" opacity=".25" transform="translate(0 6)" />
      <path d="M-41-47h82v73L0 53l-41-27Z" fill={color} stroke="#fff" strokeWidth="7" />
      <g transform="translate(-27 -31) scale(3)" fill="none" stroke="#fff" strokeWidth="2" strokeLinecap="round">
        <path d="M2.900 13.400C1.600 13.300 1 12.600 1 11.400V4.200C1 2.100 2.100 1 4.200 1h6.600c1 0 1.700.3 2.200 1.100l3.200 4.600c.6.8.8 1.500.8 2.400v2.300c0 1.200-.6 1.900-1.800 2M7.300 13.500h3.200" />
        <circle cx="5.100" cy="13.300" r="1.700" />
        <circle cx="12.900" cy="13.300" r="1.700" />
        <path d="M4.200 6.400h6" stroke="#8db4f5" />
      </g>
    </g>
  );
}

function StopPin({ x, y, minus = false }: { x: number; y: number; minus?: boolean }) {
  return (
    <g transform={`translate(${x} ${y})`}>
      <path d="M-27-30h54v52L0 38l-27-16Z" fill="#1f4a38" opacity=".3" transform="translate(0 4)" />
      <path d="M-27-32h54v52L0 35l-27-15Z" fill={minus ? "#f0544f" : "#45c78b"} />
      <path d={minus ? "M-18 0h36" : "M-18 0h36M0-18v36"} stroke="#fff" strokeWidth="8" />
    </g>
  );
}

function CityMap() {
  return (
    <section aria-label="Map" className="mb-0.5 min-w-0 flex-1 overflow-hidden rounded-[5px]">
      <svg viewBox="18 15 1983 2400" preserveAspectRatio="xMidYMid slice" className="block h-full w-full" fill="none" strokeLinejoin="round">
        {tiles.map((t, i) => (
          <g key={i} transform={`translate(${t.x} ${t.y})`}>
            <rect width={t.w} height={t.h} fill={t.base === "green" ? "#bbe2c6" : "#e8e9ed"} />
            {t.grey.map((p) => <polygon key={p} points={p} fill="#e8e9ed" />)}
            {t.green.map((p) => <polygon key={p} points={p} fill="#bbe2c6" />)}
            {t.park.map((p) => <polygon key={p} points={p} fill="#a8dab5" />)}
            {t.lake.map((p) => <polygon key={p} points={p} fill="#9cc0f9" />)}
          </g>
        ))}
        <polygon points="1090,15 1105,50 990,190 900,320 800,325 830,270 930,140 1020,45 1050,15" fill="#dfe0e5" />
        <polyline points="1210,1140 1265,1190 1330,1330 1390,1425 1480,1485 1540,1590" stroke="#bbe2c6" strokeWidth="60" />
        <polyline points={elbe} stroke="#9cc0f9" strokeWidth="24" />
        <path d="M300 1105h182" stroke="#9cc0f9" strokeWidth="10" />
        {tiles.map((t, i) => (
          <g key={i} transform={`translate(${t.x} ${t.y})`}>
            {t.rail.map((p) => <polyline key={p} points={p} stroke="#d3d5da" strokeWidth="4" />)}
            {t.road.map((p, n) => <polyline key={p} points={p} stroke="#fff" strokeWidth={n < 2 ? 8 : 6} strokeLinecap="round" />)}
          </g>
        ))}
        {yellowRoads.map((p) => <polyline key={p} points={p} stroke="#efbc4e" strokeWidth="15" />)}
        {mainRoads.map((p) => <polyline key={p} points={p} stroke="#e9b040" strokeWidth="20" />)}
        {yellowRoads.map((p) => <polyline key={p} points={p} stroke="#ffe9a8" strokeWidth="9" />)}
        {mainRoads.map((p) => <polyline key={p} points={p} stroke="#ffe9a8" strokeWidth="12" />)}

        <District x={965} y={274} size="lg">KLOTZSCHE</District>
        <District x={763} y={438} size="sm">KLOTZSCHE</District>
        <District x={521} y={940} size="lg">PIESCHEN</District>
        <District x={992} y={980} size="lg">NEUSTADT</District>
        <District x={480} y={1152} size="lg">FRIEDRICHSTADT</District>
        <District x={123} y={1376} size="lg">COTTA</District>
        <District x={377} y={1402} size="sm">LÖBTAU</District>
        <District x={1166} y={1394} size="sm">BLASEWITZ</District>
        <District x={506} y={1725} size="sm">PLAUEN</District>
        <District x={1461} y={1830} size="lg">LEUBEN</District>
        <District x={1130} y={1916} size="lg">PROHLIS</District>
        <District x={1815} y={1842} size="sm">PILLNITZ</District>
        <Town x={522} y={2044}>Bannewitz</Town>
        <Town x={1750} y={2280}>Heidenau</Town>
        <text x="18" y="493" fill="#202124" className="font-[Roboto,sans-serif] text-[42px] font-medium">ul</text>
        <text x="18" y="1950" fill="#202124" className="font-[Roboto,sans-serif] text-[42px] font-medium">l</text>
        <text x="684" y="1310" textAnchor="middle" fill="#202124" stroke="#fff" strokeWidth="6" paintOrder="stroke" className="font-['Liberation_Sans',sans-serif] text-[93px]">Dresden</text>
        <text transform="translate(32 770) rotate(48)" fill="#2f66c9" className="font-[Roboto,sans-serif] text-[36px]">Elbe</text>
        <text transform="translate(1590 1732) rotate(40)" fill="#2f66c9" className="font-[Roboto,sans-serif] text-[36px]">Elbe</text>

        <RoadSign x={628} y={550} blue>4</RoadSign>
        <RoadSign x={136} y={990} blue>4</RoadSign>
        <RoadSign x={748} y={1923} blue>17</RoadSign>
        <RoadSign x={673} y={671}>170</RoadSign>
        <RoadSign x={635} y={1604}>170</RoadSign>
        <RoadSign x={888} y={835}>97</RoadSign>
        <RoadSign x={899} y={1098}>6</RoadSign>
        <RoadSign x={1840} y={1160}>6</RoadSign>
        <rect x="414" y="2406" width="82" height="20" fill="#fdd835" />

        <polyline points={route} stroke="#1f5f45" strokeOpacity=".25" strokeWidth="38" strokeLinecap="round" />
        <polyline points={route} stroke="#2f9c6a" strokeWidth="31" strokeLinecap="round" />
        <polyline points={route} stroke="#45c48a" strokeWidth="19" strokeLinecap="round" />
        <path d="M608 1823h24v26l-12 8-12-8Z" fill="#fff" />

        <StopPin x={1302} y={1064} minus />
        <StopPin x={882} y={1197} />
        <StopPin x={822} y={1315} />
        <StopPin x={1203} y={1215} />
        <StopPin x={756} y={1650} />
        <VehiclePin x={1039} y={328} color="#8494a7" />
        <VehiclePin x={91} y={1149} color="#8494a7" />
        <VehiclePin x={1304} y={1552} color="#8494a7" />
        <VehiclePin x={1039} y={1182} color="#1559d6" />
      </svg>
    </section>
  );
}

export default function App() {
  return (
    <div className="flex min-h-screen bg-white font-['DejaVu_Sans_Condensed','Noto_Sans',sans-serif] text-black">
      <Sidebar />
      <div className="flex min-w-0 flex-1 flex-col">
        <Header />
        <Tabs />
        <main className="flex flex-1 gap-[15px] pt-[25px] pr-[45px] pb-[25px] pl-[25px]">
          <VehiclePanel />
          <TourPanel />
          <CityMap />
        </main>
      </div>
    </div>
  );
}
